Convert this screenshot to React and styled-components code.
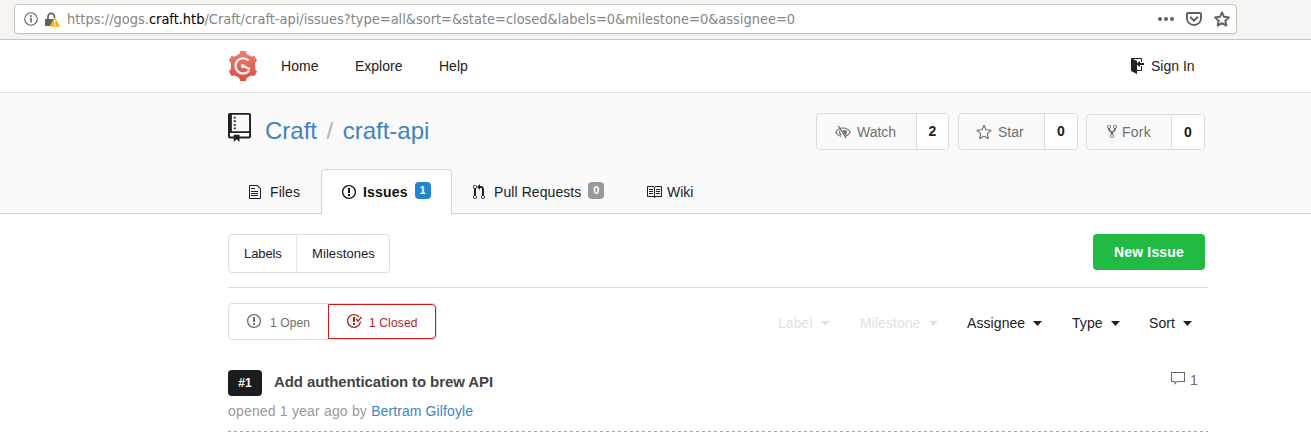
import React from "react";
import styled, { createGlobalStyle } from "styled-components";

const Global = createGlobalStyle`
  *{box-sizing:border-box}
  html,body{margin:0;padding:0;background:#fff;overflow:hidden}
  body{font-family:"Liberation Sans",Arial,sans-serif;font-size:14px;line-height:18px;color:#212121}
`;

/* ---------- icons ---------- */
const Svg = styled.svg`
  display: block;
  flex: none;
  fill: currentColor;
  margin-top: ${(p) => p.$top || 0}px;
  margin-right: ${(p) => p.$gap || 0}px;
`;
const paths = {
  repo: ["0 0 12 16", "M4 9H3V8h1v1zm0-3H3v1h1V6zm0-2H3v1h1V4zm0-2H3v1h1V2zm8-1v12c0 .55-.45 1-1 1H6v2l-1.5-1.5L3 16v-2H1c-.55 0-1-.45-1-1V1c0-.55.45-1 1-1h10c.55 0 1 .45 1 1zm-1 10H1v2h2v-1h3v1h5v-2zm0-10H2v9h9V1z"],
  signIn: ["1 0 13 16", "M7 6.75V12h4V8h1v4c0 .55-.45 1-1 1H7v3l-5.45-2.72c-.33-.17-.55-.52-.55-.91V1c0-.55.45-1 1-1h9c.55 0 1 .45 1 1v3h-1V1H3l4 2v2.25L10 3v2h4v2h-4v2L7 6.75z"],
  opened: ["0 1 14 14", "M7 2.3c3.14 0 5.7 2.56 5.7 5.7s-2.56 5.7-5.7 5.7A5.71 5.71 0 0 1 1.3 8c0-3.14 2.56-5.7 5.7-5.7zM7 1C3.14 1 0 4.14 0 8s3.14 7 7 7 7-3.14 7-7-3.14-7-7-7zm1 3H6v5h2V4zm0 6H6v2h2v-2z"],
  closed: ["1 1 15 14", "M7 10h2v2H7v-2zm2-6H7v5h2V4zm1.5 1.5l-1 1L12 9l4-4.5-1-1L12 7l-1.5-1.5zM8 13.7A5.71 5.71 0 0 1 2.3 8c0-3.14 2.56-5.7 5.7-5.7 1.83 0 3.45.88 4.5 2.2l.92-.92A6.947 6.947 0 0 0 8 1C4.14 1 1 4.14 1 8s3.14 7 7 7 7-3.14 7-7l-1.52 1.52c-.66 2.41-2.86 4.19-5.48 4.19v-.01z"],
  pull: ["0 0 12 15", "M11 11.28V5c-.03-.78-.34-1.47-.94-2.06C9.46 2.35 8.78 2.03 8 2H7V0L4 3l3 3V4h1c.27.02.48.11.69.31.21.2.3.42.31.69v6.28A1.993 1.993 0 0 0 10 15a1.993 1.993 0 0 0 1-3.72zm-1 2.92c-.66 0-1.2-.55-1.2-1.2 0-.65.55-1.2 1.2-1.2.65 0 1.2.55 1.2 1.2 0 .65-.55 1.2-1.2 1.2zM4 3c0-1.11-.89-2-2-2a1.993 1.993 0 0 0-1 3.72v6.56A1.993 1.993 0 0 0 2 15a1.993 1.993 0 0 0 1-3.72V4.72c.59-.34 1-.98 1-1.72zm-.8 10c0 .66-.55 1.2-1.2 1.2-.65 0-1.2-.55-1.2-1.2 0-.65.55-1.2 1.2-1.2.65 0 1.2.55 1.2 1.2zM2 4.2C1.34 4.2.8 3.65.8 3c0-.65.55-1.2 1.2-1.2.65 0 1.2.55 1.2 1.2 0 .65-.55 1.2-1.2 1.2z"],
  book: ["1 2 15 12", "M3 5h4v1H3V5zm0 3h4V7H3v1zm0 2h4V9H3v1zm11-5h-4v1h4V5zm0 2h-4v1h4V7zm0 2h-4v1h4V9zm2-6v9c0 .55-.45 1-1 1H9.5l-1 1-1-1H2c-.55 0-1-.45-1-1V3c0-.55.45-1 1-1h5.5l1 1 1-1H15c.55 0 1 .45 1 1zm-8 .5L7.5 3H2v9h6V3.5zm7-.5H9.5l-.5.5V12h6V3z"],
  file: ["0 1 12 14", "M6 5H2V4h4v1zM2 8h7V7H2v1zm0 2h7V9H2v1zm0 2h7v-1H2v1zm10-7.5V14c0 .55-.45 1-1 1H1c-.55 0-1-.45-1-1V2c0-.55.45-1 1-1h7.5L12 4.5zM11 5L8 2H1v12h10V5z"],
  fork: ["0 1 10 14", "M8 1a1.993 1.993 0 0 0-1 3.72V6L5 8 3 6V4.72A1.993 1.993 0 0 0 2 1a1.993 1.993 0 0 0-1 3.72V6.5l3 3v1.78A1.993 1.993 0 0 0 5 15a1.993 1.993 0 0 0 1-3.72V9.5l3-3V4.72A1.993 1.993 0 0 0 8 1zM2 4.2C1.34 4.2.8 3.65.8 3c0-.65.55-1.2 1.2-1.2.65 0 1.2.55 1.2 1.2 0 .65-.55 1.2-1.2 1.2zm3 10c-.66 0-1.2-.55-1.2-1.2 0-.65.55-1.2 1.2-1.2.65 0 1.2.55 1.2 1.2 0 .65-.55 1.2-1.2 1.2zm3-10c-.66 0-1.2-.55-1.2-1.2 0-.65.55-1.2 1.2-1.2.65 0 1.2.55 1.2 1.2 0 .65-.55 1.2-1.2 1.2z"],
  comment: ["0 0 14 13", "M0 0h14v10H6L3.5 13 3.5 10H0zM1 1v8h3.5v1.5L6 9h7V1z"],
  caret: ["0 0 9 5", "M0 0h9L4.5 5z"],
};
const Icon = ({ name, w, h, top, gap }) => (
  <Svg viewBox={paths[name][0]} width={w} height={h} $top={top} $gap={gap} preserveAspectRatio="none">
    <path fillRule="evenodd" d={paths[name][1]} />
  </Svg>
);
const StarIcon = ({ size, stroke, gap, top }) => (
  <Svg viewBox="0 0 16 16" width={size} height={size} $gap={gap} $top={top}>
    <path d="M8 1.3l2 4.5 5 .6-3.7 3.3 1 4.9L8 12.2l-4.3 2.4 1-4.9L1 6.4l5-.6z" fill="none" stroke="currentColor" strokeWidth={stroke} strokeLinejoin="round" />
  </Svg>
);
const UnwatchIcon = () => (
  <Svg viewBox="0 0 16 14" width="16" height="14" $gap={6}>
    <g fill="none" stroke="currentColor" strokeWidth="1.2">
      <path d="M6 11.4C3.800 10.800 2 9.300.8 7.200 2 5 4.300 3 8 3c3.600 0 6 2 7.200 4.200-1.100 2-2.700 3.500-5 4.100" />
      <path d="M5.200 5.200c-1 1.900-.5 3.800 1.200 5" />
      <path d="M3.300.7l7.900 12.600" />
      <path d="M11.300 5.300c.7 1.800.2 3.500-1.100 4.700L7.500 5.300" fill="currentColor" strokeWidth=".6" />
    </g>
  </Svg>
);
const Logo = () => (
  <Svg viewBox="0 0 30 30" width="30" height="30" $gap={23}>
    <defs>
      <linearGradient id="gear" x1="0" y1="0" x2="0" y2="1">
        <stop offset="0" stopColor="#e97f76" />
        <stop offset="1" stopColor="#df4c40" />
      </linearGradient>
    </defs>
    <path
      fill="url(#gear)"
      d="M12.300 0h5.400l1 3 4.600 2.500 3.200-.6 2.600 4.600-2 2.500v6l2 2.500-2.600 4.600-3.200-.6-4.600 2.500-1 3h-5.400l-1-3-4.600-2.500-3.200.6L.9 20.500l2-2.500v-6l-2-2.500 2.600-4.600 3.200.6L11.300 3z"
    />
    <path d="M20.600 9.600A7.600 7.600 0 1 0 21 19.700" fill="none" stroke="#fff" strokeWidth="2.200" />
    <circle cx="14.800" cy="15" r="1.900" fill="#fff" />
    <path d="M14.800 15l6.400 2.800" fill="none" stroke="#fff" strokeWidth="2.200" strokeLinecap="round" />
  </Svg>
);

/* ---------- browser address bar ---------- */
const Chrome = styled.div`
  height: 40px;
  padding: 4px 74px 0 14px;
  background: #f5f4f2;
  border-bottom: 1px solid #cbc7c0;
`;
const AddressBar = styled.div`
  height: 30px;
  display: flex;
  align-items: center;
  padding: 0 6px 0 9px;
  background: #fff;
  border: 1px solid #c9c4bc;
  border-radius: 4px;
  box-shadow: 0 1px 1px rgba(0, 0, 0, 0.06);
  color: #606060;
`;
const Url = styled.div`
  flex: 1;
  font: 14.45px/20px "DejaVu Sans Condensed", "DejaVu Sans", sans-serif;
  font-stretch: condensed;
  color: #858585;
  white-space: nowrap;
  b { color: #000; font-weight: 400; }
`;

/* ---------- site navigation ---------- */
const Navbar = styled.nav`
  height: 53px;
  display: flex;
  align-items: center;
  padding: 0 116px 0 228px;
  border-bottom: 1px solid #dedede;
`;
const NavLink = styled.a`
  display: block;
  width: ${(p) => p.$w}px;
  letter-spacing: ${(p) => p.$track || 0}px;
`;
const Spacer = styled.div`flex: 1;`;

/* ---------- repository header ---------- */
const RepoHeader = styled.header`
  height: 121px;
  padding: 20px 0 0 228px;
  background: #fafafa;
  border-bottom: 1px solid #d4d4d5;
`;
const TitleRow = styled.div`
  display: flex;
  height: 56px;
  width: 977px;
`;
const RepoName = styled.h1`
  flex: 1;
  margin: 3px 0 0;
  font: 24px/30px "Liberation Sans", Arial, sans-serif;
  color: #4183c4;
  span { color: #b3b3b3; margin: 0 9.5px; }
`;
const Counter = styled.div`
  display: flex;
  width: ${(p) => p.$w}px;
  height: ${(p) => (p.$low ? 36 : 37)}px;
  margin-top: ${(p) => (p.$low ? 1 : 0)}px;
  margin-left: ${(p) => p.$left || 0}px;
  border: 1px solid #dadbdc;
  border-radius: 4px;
  overflow: hidden;
`;
const CounterAction = styled.div`
  flex: 1;
  display: flex;
  align-items: center;
  padding-left: ${(p) => p.$pad}px;
  letter-spacing: ${(p) => p.$track || 0}px;
  color: #6f6f6f;
`;
const CounterValue = styled.div`
  width: ${(p) => p.$w || 32}px;
  display: flex;
  align-items: center;
  justify-content: center;
  padding-bottom: ${(p) => p.$lift || 0}px;
  background: #fff;
  border-left: 1px solid #dadbdc;
  font-weight: 700;
`;
const Tabs = styled.div`
  display: flex;
  height: 45px;
`;
const Tab = styled.div`
  display: flex;
  align-items: center;
  width: ${(p) => p.$w}px;
  height: 45px;
  padding: 0 0 1px ${(p) => p.$pad || 20}px;
  border: 1px solid transparent;
  border-bottom: 0;
  ${(p) => p.$active && "background:#fff;border-color:#d4d4d5;border-radius:4px 4px 0 0;font-weight:700;color:#111;"}
  letter-spacing: ${(p) => p.$track || 0}px;
`;
const Badge = styled.span`
  width: 16px;
  height: 17px;
  margin: -2px 0 0 ${(p) => p.$left}px;
  border-radius: 4px;
  background: ${(p) => p.$color};
  color: #fff;
  font: 700 11px/17px "Liberation Sans", Arial, sans-serif;
  letter-spacing: 0;
  text-align: center;
`;

/* ---------- issue list ---------- */
const Content = styled.main`
  width: 980px;
  margin-left: 228px;
`;
const Toolbar = styled.div`
  display: flex;
  justify-content: space-between;
  height: 74px;
  padding: 20px 3px 0 0;
  border-bottom: 1px solid #dedede;
`;
const Segments = styled.div`
  display: flex;
  width: ${(p) => p.$w}px;
  height: ${(p) => p.$h}px;
  border: 1px solid #dededf;
  border-radius: 4px;
`;
const Segment = styled.a`
  display: flex;
  align-items: center;
  width: ${(p) => p.$w}px;
  padding-left: 15px;
  font-size: 13px;
  letter-spacing: -0.1px;
  & + & { border-left: 1px solid #e4e4e5; letter-spacing: 0.08px; }
`;
const StateSegment = styled.a`
  display: flex;
  align-items: center;
  width: ${(p) => p.$w}px;
  padding: 2px 0 0 18px;
  font-size: 12px;
  letter-spacing: 0.1px;
  color: #6d6d6d;
  ${(p) => p.$selected && "border:1px solid #d01919;border-radius:0 4px 4px 0;color:#b21e1e;letter-spacing:0.15px;"}
`;
const PrimaryButton = styled.button`
  width: 112px;
  height: 36px;
  padding: 0;
  border: 0;
  border-radius: 4px;
  background: #21ba45;
  color: #fff;
  font: 700 14px/36px "Liberation Sans", Arial, sans-serif;
  letter-spacing: 0.15px;
`;
const FilterRow = styled.div`
  display: flex;
  justify-content: space-between;
  padding-top: 15px;
`;
const Filters = styled.div`
  display: flex;
  align-items: center;
  width: 430px;
  height: 40px;
`;
const Filter = styled.div`
  display: flex;
  align-items: center;
  width: ${(p) => p.$w}px;
  color: ${(p) => (p.$off ? "#e2e2e2" : "#212121")};
  span { width: ${(p) => p.$text}px; letter-spacing: 0.08px; }
`;
const Issue = styled.article`
  height: 89px;
  padding-top: 27px;
  background: repeating-linear-gradient(90deg, #a9a9a9 0 3px, transparent 3px 6px) bottom / 100% 1px no-repeat;
`;
const IssueTop = styled.div`
  display: flex;
  height: 26px;
  align-items: center;
`;
const Number = styled.span`
  width: 34px;
  height: 26px;
  border-radius: 4px;
  background: #1b1c1d;
  color: #fff;
  font: 700 12px/26px "Liberation Sans", Arial, sans-serif;
  text-align: center;
`;
const IssueTitle = styled.a`
  flex: 1;
  margin: -2px 0 0 12px;
  font-size: 15px;
  font-weight: 700;
  letter-spacing: -0.1px;
  color: #444;
`;
const Comments = styled.div`
  display: flex;
  width: 37px;
  margin-top: -5px;
  color: #6a6a6a;
  span { margin-top: -1px; }
`;
const Meta = styled.p`
  margin: 6px 0 0;
  letter-spacing: 0.18px;
  color: #999;
  a { color: #4183c4; letter-spacing: 0.1px; }
`;

export default function App() {
  return (
    <>
      <Global />
      <Chrome>
        <AddressBar>
          <Svg viewBox="0 0 14 14" width="14" height="14" $gap={7}>
            <circle cx="7" cy="7" r="6.300" fill="none" stroke="currentColor" strokeWidth="1.100" />
            <path d="M6.200 6h1.600v4.500H6.200zM6.200 3.300h1.600v1.600H6.200z" />
          </Svg>
          <Svg viewBox="0 0 15 15" width="15" height="15" $gap={7}>
            <path d="M3 7V4.500a3.200 3.200 0 0 1 6.400 0V6" fill="none" stroke="#606060" strokeWidth="1.700" />
            <path d="M0 7h9v7H0z" />
            <path d="M9.700 5.800l4.600 8.400H5.100z" fill="#ffb010" stroke="#ffb010" strokeLinejoin="round" />
            <path d="M9 8h1.400v3.500H9zM9 12.300h1.400v1.300H9z" fill="#fff" />
          </Svg>
          <Url>
            https://gogs.<b>craft.htb</b>/Craft/craft-api/issues?type=all&amp;sort=&amp;state=closed&amp;labels=0&amp;milestone=0&amp;assignee=0
          </Url>
          <Svg viewBox="0 0 16 4" width="16" height="4" $gap={12}>
            <circle cx="2" cy="2" r="2" /><circle cx="8" cy="2" r="2" /><circle cx="14" cy="2" r="2" />
          </Svg>
          <Svg viewBox="0 0 16 14" width="16" height="14" $gap={12}>
            <path d="M2 1h12a1 1 0 0 1 1 1v4.500a7 6.500 0 0 1-14 0V2a1 1 0 0 1 1-1z" fill="none" stroke="currentColor" strokeWidth="1.900" />
            <path d="M4.500 5.300L8 8.600l3.500-3.300" fill="none" stroke="currentColor" strokeWidth="1.900" strokeLinecap="round" />
          </Svg>
          <StarIcon size={16} stroke={1.9} />
        </AddressBar>
      </Chrome>

      <Navbar>
        <Logo />
        <NavLink $w={74} $track={0.1}>Home</NavLink>
        <NavLink $w={84}>Explore</NavLink>
        <NavLink $w={50}>Help</NavLink>
        <Spacer />
        <Icon name="signIn" w={13} h={16} gap={7} top={-1} />
        <NavLink $w={44}>Sign In</NavLink>
      </Navbar>

      <RepoHeader>
        <TitleRow>
          <Icon name="repo" w={23} h={29} gap={14} />
          <RepoName>Craft<span>/</span>craft-api</RepoName>
          <Counter $w={133}>
            <CounterAction $pad={18}><UnwatchIcon />Watch</CounterAction>
            <CounterValue $lift={1}>2</CounterValue>
          </Counter>
          <Counter $w={120} $left={9}>
            <CounterAction $pad={17}><StarIcon size={16} stroke={1.1} gap={6} />Star</CounterAction>
            <CounterValue $w={33} $lift={1}>0</CounterValue>
          </Counter>
          <Counter $w={119} $left={8} $low>
            <CounterAction $pad={20} $track={0.25}><Icon name="fork" w={10} h={13} gap={5} top={-2} />Fork</CounterAction>
            <CounterValue $w={33}>0</CounterValue>
          </Counter>
        </TitleRow>
        <Tabs>
          <Tab $w={93} $track={0.1}><Icon name="file" w={12} h={14} gap={9} />Files</Tab>
          <Tab $w={131} $active $track={0.17}><Icon name="opened" w={14} h={14} gap={7} />Issues<Badge $left={7} $color="#2185d0">1</Badge></Tab>
          <Tab $w={174} $track={0.08}><Icon name="pull" w={12} h={15} gap={9} />Pull Requests<Badge $left={7} $color="#999">0</Badge></Tab>
          <Tab $w={90}><Icon name="book" w={15} h={12} gap={5} />Wiki</Tab>
        </Tabs>
      </RepoHeader>

      <Content>
        <Toolbar>
          <Segments $w={162} $h={39}>
            <Segment $w={67}>Labels</Segment>
            <Segment $w={93}>Milestones</Segment>
          </Segments>
          <PrimaryButton>New Issue</PrimaryButton>
        </Toolbar>
        <FilterRow>
          <Segments $w={209} $h={37}>
            <StateSegment $w={99}><Icon name="opened" w={14} h={14} gap={9} top={-4} />1 Open</StateSegment>
            <StateSegment $w={108} $selected><Icon name="closed" w={15} h={14} gap={7} top={-4} />1 Closed</StateSegment>
          </Segments>
          <Filters>
            <Filter $w={82} $text={43} $off><span>Label</span><Icon name="caret" w={9} h={5} /></Filter>
            <Filter $w={107} $text={69} $off><span>Milestone</span><Icon name="caret" w={9} h={5} /></Filter>
            <Filter $w={105} $text={66}><span>Assignee</span><Icon name="caret" w={9} h={5} /></Filter>
            <Filter $w={77} $text={39}><span>Type</span><Icon name="caret" w={9} h={5} /></Filter>
            <Filter $w={59} $text={34}><span>Sort</span><Icon name="caret" w={9} h={5} /></Filter>
          </Filters>
        </FilterRow>
        <Issue>
          <IssueTop>
            <Number>#1</Number>
            <IssueTitle>Add authentication to brew API</IssueTitle>
            <Comments><Icon name="comment" w={14} h={13} gap={5} /><span>1</span></Comments>
          </IssueTop>
          <Meta>opened 1 year ago by <a>Bertram Gilfoyle</a></Meta>
        </Issue>
      </Content>
    </>
  );
}
